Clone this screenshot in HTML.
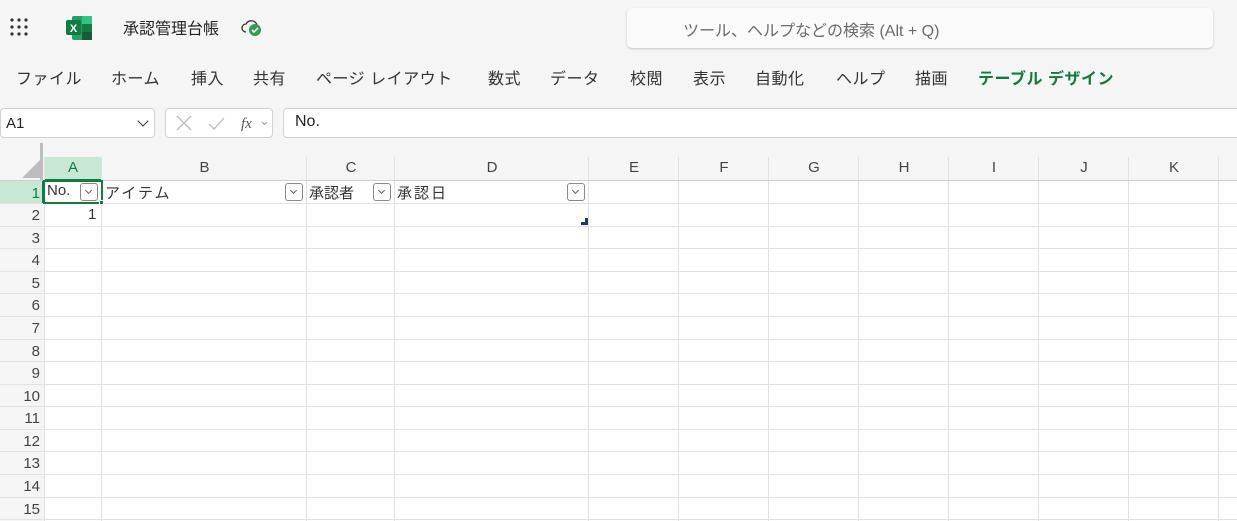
<!DOCTYPE html>
<html><head><meta charset="utf-8"><style>
*{margin:0;padding:0;box-sizing:border-box}
body{width:1237px;height:521px;background:#f5f5f5;font-family:"Liberation Sans","Noto Sans CJK JP",sans-serif;position:relative;overflow:hidden;color:#242424}
.a{position:absolute;white-space:nowrap}
.menu span{position:absolute;top:65px;font-size:16px;color:#333;letter-spacing:0.5px}
.vl{position:absolute;top:157px;width:1px;height:364px;background:#e1e1e1}
.hl{position:absolute;left:0;width:1237px;height:1px;background:#e1e1e1}
.ch{position:absolute;top:159px;font-size:15px;color:#444;text-align:center}
.rn{position:absolute;left:0;width:40px;text-align:right;font-size:15px;color:#444}
.dd{position:absolute;top:183px;width:18px;height:18px;border:1px solid #8a8a8a;border-radius:3px;background:#fff}
.dd:after{content:"";position:absolute;left:5px;top:4px;width:4px;height:4px;border-right:1px solid #666;border-bottom:1px solid #666;transform:rotate(45deg)}
.cell{position:absolute;top:182px;font-size:15px;color:#333}
</style></head><body>
<svg class="a" style="left:10px;top:18px" width="20" height="20"><g fill="#333"><circle cx="2" cy="2" r="1.6"/><circle cx="9" cy="2" r="1.6"/><circle cx="16" cy="2" r="1.6"/><circle cx="2" cy="9" r="1.6"/><circle cx="9" cy="9" r="1.6"/><circle cx="16" cy="9" r="1.6"/><circle cx="2" cy="16" r="1.6"/><circle cx="9" cy="16" r="1.6"/><circle cx="16" cy="16" r="1.6"/></g></svg>
<svg class="a" style="left:66px;top:16px" width="26" height="24"><rect x="6" y="0" width="20" height="24" rx="2" fill="#21a366"/><rect x="16" y="0" width="10" height="8" fill="#33c481"/><rect x="16" y="8" width="10" height="8" fill="#107c41"/><rect x="16" y="16" width="10" height="8" fill="#185c37"/><rect x="0" y="4" width="15" height="15" rx="2" fill="#107c41"/><text x="7.5" y="16" font-size="11" font-weight="bold" fill="#fff" text-anchor="middle" font-family="Liberation Sans">X</text></svg>
<div class="a" style="left:123px;top:15px;font-size:16px">承認管理台帳</div>
<svg class="a" style="left:240px;top:16px" width="24" height="22"><path d="M6 16a4 4 0 0 1 0-8 6 6 0 0 1 11 1 3.5 3.5 0 0 1 2 2" fill="none" stroke="#333" stroke-width="1.3"/><circle cx="15" cy="14" r="6" fill="#2e9e4f"/><path d="M12 14l2 2 4-4" stroke="#fff" stroke-width="1.6" fill="none"/></svg>
<div class="a" style="left:627px;top:8px;width:586px;height:40px;background:#fafafa;border-radius:5px;box-shadow:0 1px 2px rgba(0,0,0,.2)"></div>
<div class="a" style="left:683px;top:17px;font-size:16px;color:#6b6b6b">ツール、ヘルプなどの検索 (Alt + Q)</div>
<div class="menu">
<span style="left:16px">ファイル</span><span style="left:111px">ホーム</span><span style="left:191px">挿入</span><span style="left:253px">共有</span><span style="left:316px">ページ レイアウト</span><span style="left:488px">数式</span><span style="left:550px">データ</span><span style="left:630px">校閲</span><span style="left:693px">表示</span><span style="left:755px">自動化</span><span style="left:836px">ヘルプ</span><span style="left:915px">描画</span><span style="left:978px;color:#107c41;font-weight:bold">テーブル デザイン</span>
</div>
<div class="a" style="left:0;top:108px;width:155px;height:30px;background:#fff;border:1px solid #d1d1d1;border-radius:4px"></div>
<div class="a" style="left:6px;top:115px;font-size:15px">A1</div>
<div class="a" style="left:139px;top:117px;width:8px;height:8px;border-right:1.5px solid #333;border-bottom:1.5px solid #333;transform:rotate(45deg)"></div>
<div class="a" style="left:165px;top:108px;width:108px;height:30px;background:#fff;border:1px solid #d1d1d1;border-radius:4px"></div>
<svg class="a" style="left:175px;top:114px" width="100" height="18"><path d="M2 2l14 14M16 2L2 16" stroke="#bbb" stroke-width="1.3"/><path d="M34 10l5 5 10-11" stroke="#bbb" stroke-width="1.3" fill="none"/><text x="66" y="14" font-size="15" font-style="italic" fill="#555" font-family="Liberation Serif">fx</text><path d="M87 8l2.5 2.5L92 8" stroke="#999" fill="none"/></svg>
<div class="a" style="left:283px;top:108px;width:960px;height:30px;background:#fff;border:1px solid #d1d1d1;border-radius:4px"></div>
<div class="a" style="left:295px;top:113px;font-size:16px">No.</div>
<div class="a" style="left:0;top:157px;width:1237px;height:364px;background:#fff"></div>
<div class="a" style="left:0;top:157px;width:1237px;height:24px;background:#f5f5f5"></div>
<div class="a" style="left:0;top:157px;width:44px;height:364px;background:#f5f5f5"></div>
<div class="a" style="left:44px;top:157px;width:58px;height:24px;background:#c9e7d5;border-bottom:2px solid #107c41"></div>
<div class="a" style="left:0;top:181px;width:44px;height:23px;background:#c9e7d5;border-right:2px solid #107c41"></div>
<div class="a" style="left:40px;top:143px;width:3px;height:38px;background:#bdbdbd"></div>
<svg class="a" style="left:22px;top:160px" width="18" height="18"><path d="M18 0V18H0Z" fill="#bdbdbd"/></svg>
<div class="vl" style="left:44px"></div><div class="vl" style="left:101px"></div><div class="vl" style="left:306px"></div><div class="vl" style="left:394px"></div><div class="vl" style="left:588px"></div><div class="vl" style="left:678px"></div><div class="vl" style="left:768px"></div><div class="vl" style="left:858px"></div><div class="vl" style="left:948px"></div><div class="vl" style="left:1038px"></div><div class="vl" style="left:1128px"></div><div class="vl" style="left:1218px"></div>
<div class="hl" style="top:180px;background:#d0d0d0"></div>
<div class="hl" style="top:203px"></div><div class="hl" style="top:226px"></div><div class="hl" style="top:248px"></div><div class="hl" style="top:271px"></div><div class="hl" style="top:293px"></div><div class="hl" style="top:316px"></div><div class="hl" style="top:339px"></div><div class="hl" style="top:361px"></div><div class="hl" style="top:384px"></div><div class="hl" style="top:406px"></div><div class="hl" style="top:429px"></div><div class="hl" style="top:451px"></div><div class="hl" style="top:474px"></div><div class="hl" style="top:497px"></div><div class="hl" style="top:519px"></div>
<div class="ch" style="left:44px;width:58px;color:#107c41">A</div><div class="ch" style="left:102px;width:205px">B</div><div class="ch" style="left:307px;width:88px">C</div><div class="ch" style="left:395px;width:194px">D</div><div class="ch" style="left:589px;width:90px">E</div><div class="ch" style="left:679px;width:90px">F</div><div class="ch" style="left:769px;width:90px">G</div><div class="ch" style="left:859px;width:90px">H</div><div class="ch" style="left:949px;width:90px">I</div><div class="ch" style="left:1039px;width:90px">J</div><div class="ch" style="left:1129px;width:90px">K</div>
<div class="rn" style="top:185px;color:#107c41">1</div><div class="rn" style="top:207px">2</div><div class="rn" style="top:230px">3</div><div class="rn" style="top:252px">4</div><div class="rn" style="top:275px">5</div><div class="rn" style="top:297px">6</div><div class="rn" style="top:320px">7</div><div class="rn" style="top:343px">8</div><div class="rn" style="top:365px">9</div><div class="rn" style="top:388px">10</div><div class="rn" style="top:410px">11</div><div class="rn" style="top:433px">12</div><div class="rn" style="top:455px">13</div><div class="rn" style="top:478px">14</div><div class="rn" style="top:501px">15</div>
<div class="cell" style="left:47px">No.</div>
<div class="cell" style="left:105px;letter-spacing:2px">アイテム</div>
<div class="cell" style="left:309px">承認者</div>
<div class="cell" style="left:397px;letter-spacing:2px">承認日</div>
<div class="dd" style="left:80px"></div><div class="dd" style="left:285px"></div><div class="dd" style="left:373px"></div><div class="dd" style="left:567px"></div>
<div class="a" style="left:43px;top:180px;width:60px;height:24px;border:2px solid #107c41"></div>
<div class="a" style="left:99px;top:200px;width:5px;height:5px;background:#107c41;border:1px solid #fff"></div>
<div class="a" style="left:88px;top:206px;font-size:15px;color:#333">1</div>
<svg class="a" style="left:581px;top:218px" width="7" height="7"><path d="M7 0V7H0V4H4V0Z" fill="#1e3a5f"/></svg>
</body></html>
